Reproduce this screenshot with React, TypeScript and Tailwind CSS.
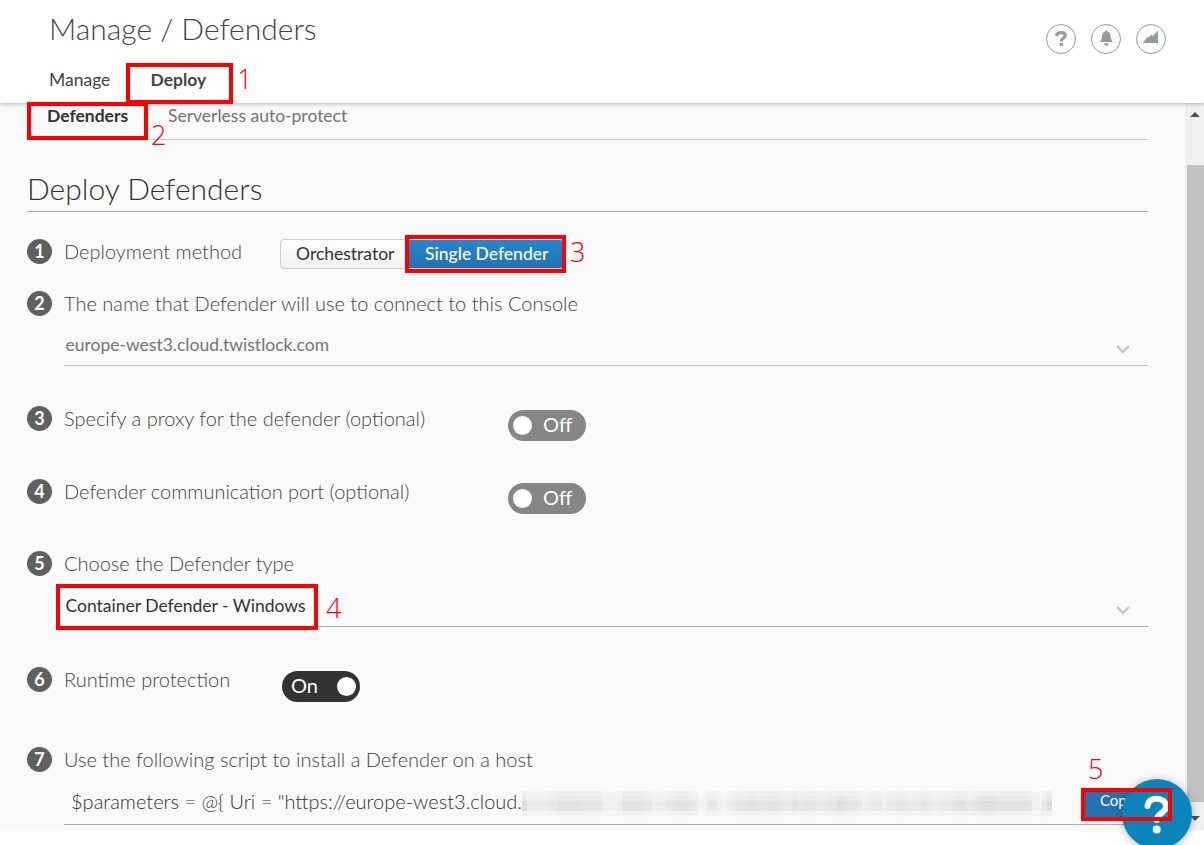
import React from "react";

const lato = "font-[Lato,sans-serif]";

function Callout({ n, className }: { n: string; className: string }) {
  return (
    <span className={`absolute z-30 whitespace-nowrap font-['Open_Sans',sans-serif] text-[27px] font-light leading-[30px] text-[#ff0000] ${className}`}>{n}</span>
  );
}

function Frame({ className }: { className: string }) {
  return <span className={`pointer-events-none absolute z-30 border-4 border-[#ff0000] ${className}`} />;
}

function Step({ n, label, labelClass, children, className }: { n: number; label: string; labelClass?: string; children?: React.ReactNode; className: string }) {
  return (
    <div className={`flex items-start ${className}`}>
      <span className="flex size-[25px] shrink-0 items-center justify-center rounded-full bg-[#606060] pb-px text-[18px] font-bold leading-none text-white">{n}</span>
      <span className={`-mt-px ml-3 whitespace-nowrap text-[20px] font-light leading-[26px] text-[#444] ${labelClass ?? ""}`}>{label}</span>
      {children}
    </div>
  );
}

function Off() {
  return (
    <span className="flex h-[31px] w-[78px] items-center rounded-full bg-[#868686] pl-[5px]">
      <span className="size-[19px] rounded-full bg-white" />
      <span className="ml-[11px] pb-[4px] text-[20px] leading-[28px] text-white">Off</span>
    </span>
  );
}

function Chevron() {
  return (
    <svg className="mr-[18px] mt-[4px] h-[9px] w-[14px]" viewBox="0 0 14 9" fill="none" stroke="#b9c3ca" strokeWidth="2">
      <path d="M1 1l6 6 6-6" />
    </svg>
  );
}

const shades = "84444557777766663334777765344667765225532456677667765575666556687665345535566555654455677567888777777633686643";
const rowStrength = [0.4, 0.65, 1, 0.9, 0.35, 0.08];

function Redacted() {
  return (
    <svg className="h-[30px] w-[533px] shrink-0" viewBox="0 0 533 30" shapeRendering="crispEdges">
      {shades.split("").slice(0, 106).map((s, i) =>
        rowStrength.map((k, r) => (
          <rect key={`${i}-${r}`} x={i * 5} y={r * 5} width={5} height={5} fill="#85858b" fillOpacity={Number(s) * k * 0.031} />
        )),
      )}
    </svg>
  );
}

export default function App() {
  return (
    <div className={`relative h-[845px] w-[1204px] overflow-hidden bg-white ${lato}`}>
      <header className="relative z-10 flex h-[103px] justify-between bg-white shadow-[0_1px_4px_rgba(0,0,0,0.28)]">
        <div className="pl-[49px]">
          <h1 className="mt-[9px] whitespace-nowrap text-[30px] font-light leading-[38px] text-[#444]">Manage / Defenders</h1>
          <nav className="mt-[21px] flex text-[17.5px] leading-[24px] text-[#444]">
            <span className="w-[101.5px]">Manage</span>
            <span className="font-bold">Deploy</span>
          </nav>
        </div>
        <div className="mr-[38px] mt-6 flex gap-[15px]">
          <span className="flex size-[30px] items-center justify-center rounded-full border border-[#949ca0]">
            <svg className="size-[18px]" viewBox="0 0 18 18" fill="none" stroke="#949ca0" strokeWidth="3.2">
              <path d="M4.3 6C5 3.2 7 2.6 9.2 2.6c2.800 0 4 1.300 4 3C13.200 8 9.300 8 9.300 11.400M9.300 12.800v3.200" />
            </svg>
          </span>
          <span className="flex size-[30px] items-center justify-center rounded-full border border-[#949ca0]">
            <svg className="size-[18px]" viewBox="0 0 18 18" fill="#949ca0">
              <path d="M9.300 0.300c.8 0 1.200.5 1.200 1.200 2.400.6 3 2.500 3.200 5 .2 3 1 4 2.300 5.500H2.600C3.900 10.500 4.700 9.500 4.900 6.500c.2-2.500.8-4.400 3.200-5C8.100.8 8.500.3 9.300.3ZM7 13.200h4.600c0 1.500-1.100 2.600-2.300 2.600S7 14.700 7 13.200Z" />
            </svg>
          </span>
          <span className="flex size-[30px] items-center justify-center rounded-full border border-[#949ca0]">
            <svg className="size-[18px]" viewBox="0 0 18 18" fill="#949ca0">
              <path d="M1.500 13V12L5.300 7 6.500 7.700 9.200 4.700 10.500 6 12.500 4.300 16 .3V13Z" />
            </svg>
          </span>
        </div>
      </header>

      <div className="flex h-[727px] bg-[#fafafa]">
        <main className="w-[1148px] shrink-0 pl-[27px]">
          <nav className="flex h-[37px] border-b border-[#c3c6c8] pt-px text-[17.5px] leading-[24px]">
            <span className="ml-5 w-[121px] font-bold text-[#333]">Defenders</span>
            <span className="text-[#757575]">Serverless auto-protect</span>
          </nav>
          <h2 className="h-[72px] whitespace-nowrap border-b border-[#9faeb5] pt-[28px] text-[30px] font-light leading-[40px] text-[#333]">Deploy Defenders</h2>

          <Step n={1} label="Deployment method" className="mt-[27px] h-[52px]">
            <div className="ml-[38px] flex h-[30px] w-[284px] overflow-hidden rounded-[4px] border border-[#ccc] bg-gradient-to-b from-white to-[#f0f0f0] text-[17.5px] leading-[28px]">
              <span className="w-[126px] pl-[15px] text-[#333]">Orchestrator</span>
              <span className="flex-1 bg-gradient-to-b from-[#2487cf] to-[#2272b1] pl-[18px] font-medium text-white">Single Defender</span>
            </div>
          </Step>
          <Step n={2} label="The name that Defender will use to connect to this Console" className="h-[38px]" />
          <div className="ml-[37px] flex h-[37px] justify-between border-b border-[#b9c1c6] pl-[1.5px] pt-[4px] text-[17.5px] leading-[24px] text-[#757575]">
            <span>europe-west3.cloud.twistlock.com</span>
            <span className="mt-2"><Chevron /></span>
          </div>

          <Step n={3} label="Specify a proxy for the defender (optional)" labelClass="w-[444px]" className="mt-[40px] h-[73px]">
            <span className="mt-1"><Off /></span>
          </Step>
          <Step n={4} label="Defender communication port (optional)" labelClass="w-[444px]" className="h-[72px]">
            <span className="mt-1"><Off /></span>
          </Step>
          <Step n={5} label="Choose the Defender type" className="h-[40px]" />
          <div className="ml-[37px] flex h-[36px] justify-between border-b border-[#9faeb5] pl-[1.5px] pt-[3px] text-[17.5px] leading-[24px] text-[#333]">
            <span>Container Defender - Windows</span>
            <span className="mt-2"><Chevron /></span>
          </div>
          <Step n={6} label="Runtime protection" labelClass="w-[218px]" className="mt-[40px] h-[80px]">
            <span className="mt-1 flex h-[31px] w-[78px] items-center rounded-full bg-[#333] pl-[9px]">
              <span className="w-[46px] pb-[4px] text-[20px] leading-[28px] text-white">On</span>
              <span className="size-[19px] rounded-full bg-white" />
            </span>
          </Step>
          <Step n={7} label="Use the following script to install a Defender on a host" className="h-[42px]" />
          <div className="ml-[37px] flex h-[36px] border-b border-[#9faeb5] pl-[7px]">
            <span className="-mt-px w-[451px] shrink-0 whitespace-nowrap text-[20px] font-light leading-[26px] text-[#333]">$parameters = @{"{"} Uri = "https://europe-west3.cloud.</span>
            <span className="mt-[2px]"><Redacted /></span>
            <span className="ml-[27px] h-[30px] w-[88px] shrink-0 bg-[#2273b2] pl-[18px] text-[15px] leading-[22px] text-white">Copy</span>
          </div>
        </main>
        <div className="ml-[37px] flex w-[19px] shrink-0 flex-col items-end bg-[#f0f0f0]">
          <svg className="mr-1 mt-[9px] h-[5px] w-[10px]" viewBox="0 0 10 5"><path d="M0 5L5 0l5 5Z" fill="#505050" /></svg>
          <div className="mt-[48px] h-[637px] w-[17px] bg-[#c1c1c1]" />
          <svg className="mr-1 mt-[14px] h-[5px] w-[10px]" viewBox="0 0 10 5"><path d="M0 0h10L5 5Z" fill="#505050" /></svg>
        </div>
      </div>

      <div className="absolute left-[1122px] top-[779px] z-20 size-[70px] rounded-full bg-[#0a84ba] shadow-[0_1px_8px_rgba(0,0,0,0.3)]">
        <svg className="size-[70px]" viewBox="0 0 70 70" fill="none" stroke="white" strokeWidth="6" strokeLinecap="round">
          <path d="M25.500 27C26 22 29.500 19.700 34.500 19.700S44 22.500 44 27.500C44 34 34.700 34.500 34.700 41" />
          <circle cx="34.700" cy="50.500" r="4" fill="white" stroke="none" />
        </svg>
      </div>

      <Frame className="left-[126px] top-[63px] h-[41px] w-[107px]" />
      <Frame className="left-[27px] top-[102px] h-[38px] w-[121px]" />
      <Frame className="left-[405px] top-[235px] h-[38px] w-[161px]" />
      <Frame className="left-[56px] top-[584px] h-[46px] w-[262px]" />
      <Frame className="left-[1081px] top-[788px] h-[33px] w-[91px]" />
      <Callout n="1" className="left-[237px] top-[64px]" />
      <Callout n="2" className="left-[151px] top-[120px]" />
      <Callout n="3" className="left-[570px] top-[237px]" />
      <Callout n="4" className="left-[326px] top-[593px]" />
      <Callout n="5" className="left-[1088px] top-[754px]" />
    </div>
  );
}
